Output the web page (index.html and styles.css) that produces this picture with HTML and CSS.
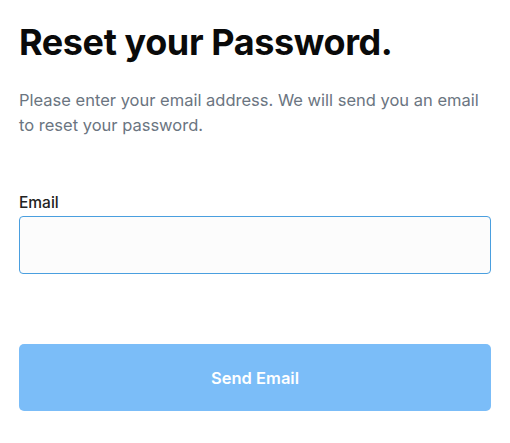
FILE: index.html
```html
<!DOCTYPE html>
<html>
<head>
<meta charset="utf-8">
<link rel="stylesheet" href="styles.css">
</head>
<body>
<main class="page">
  <h1 class="title">Reset your Password.</h1>
  <p class="intro">Please enter your email address. We will send you an email to reset your password.</p>
  <form class="form">
    <label class="label" for="email">Email</label>
    <input class="input" id="email" type="email">
    <button class="button" type="button">Send Email</button>
  </form>
</main>
</body>
</html>
```
FILE: styles.css
```css
* { box-sizing: border-box; }
html, body { margin: 0; padding: 0; background: #fff; }
body { font-family: Inter, "Noto Sans", sans-serif; }
.page { padding: 20px 19px 0 19px; width: 510px; }
.title { margin: 0; font-size: 36px; font-weight: 700; line-height: 44px; color: #0a0a0a; letter-spacing: -0.4px; }
.intro { margin: 24px 0 0 0; max-width: 466px; font-size: 16.5px; line-height: 25px; color: #6b7581; }
.form { display: flex; flex-direction: column; margin-top: 56px; }
.label { font-size: 15.5px; font-weight: 500; color: #222; line-height: 18px; margin-bottom: 4px; }
.input { height: 58px; border: 1.5px solid #4a9fdf; border-radius: 4px; background: #fcfcfc; outline: none; }
.button { margin-top: 70px; height: 67px; border: none; border-radius: 5px; background: #7bbdf8; color: #fff; font-family: Inter, "Noto Sans", sans-serif; font-size: 16.5px; font-weight: 600; }
```
